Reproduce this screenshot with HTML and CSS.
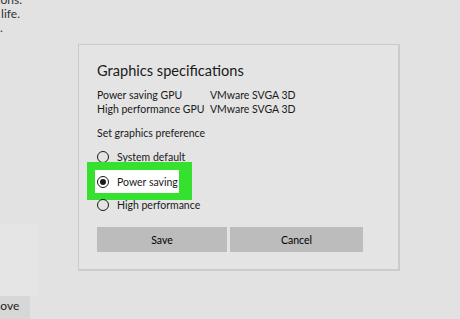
FILE: index.html
```html
<!DOCTYPE html>
<html>
<head>
<meta charset="utf-8">
<link rel="stylesheet" href="styles.css">
</head>
<body>
<div class="page">
  <div class="bg-text">
    <div class="line">tions.</div>
    <div class="line">y life.</div>
    <div class="line">.</div>
  </div>
  <div class="side-panel"></div>
  <div class="remove-btn"><span>Remove</span></div>

  <div class="dialog">
    <div class="title">Graphics specifications</div>
    <div class="specs">
      <div class="spec-row"><span class="spec-key">Power saving GPU</span><span>VMware SVGA 3D</span></div>
      <div class="spec-row"><span class="spec-key">High performance GPU</span><span>VMware SVGA 3D</span></div>
    </div>
    <div class="pref-label">Set graphics preference</div>
    <div class="options">
      <div class="option"><span class="radio"></span><span>System default</span></div>
      <div class="option selected"><span class="radio checked"></span><span>Power saving</span></div>
      <div class="option"><span class="radio"></span><span>High performance</span></div>
    </div>
    <div class="buttons">
      <div class="btn save">Save</div>
      <div class="btn cancel">Cancel</div>
    </div>
  </div>
</div>
</body>
</html>
```
FILE: styles.css
```css
html, body {
  margin: 0;
  padding: 0;
  background: #e2e2e2;
}
.page {
  position: relative;
  width: 460px;
  height: 319px;
  overflow: hidden;
  font-family: Lato, "Noto Sans", sans-serif;
  color: #1a1a1a;
  white-space: nowrap;
}
.bg-text {
  margin-top: -7px;
  font-size: 12px;
  line-height: 14px;
  color: #333;
  display: flex;
  flex-direction: column;
  align-items: flex-end;
  width: 22px;
}
.bg-text .line:nth-child(2) { margin-right: 2px; }
.bg-text .line:nth-child(3) { align-self: flex-start; }

.side-panel {
  position: absolute;
  left: 0;
  top: 224px;
  width: 38px;
  height: 72px;
  background: #e5e5e5;
}
.remove-btn {
  position: absolute;
  left: 0;
  top: 296px;
  width: 30px;
  height: 23px;
  background: #d7d7d7;
  overflow: hidden;
  font-size: 12px;
  line-height: 20px;
  color: #222;
}
.remove-btn span {
  margin-left: -23px;
}

.dialog {
  position: absolute;
  left: 78px;
  top: 44px;
  width: 301px;
  height: 224px;
  border: 1px solid #cbcbcb;
  border-right-width: 2px;
  border-bottom-width: 2px;
  background: #e4e4e4;
  padding: 0 0 0 18px;
  display: flex;
  flex-direction: column;
}
.title {
  margin-top: 17px;
  font-size: 14.6px;
  line-height: 18px;
  color: #1a1a1a;
}
.specs {
  margin-top: 8px;
  font-size: 10.5px;
  line-height: 14px;
}
.spec-row {
  display: flex;
}
.spec-key {
  width: 113px;
}
.pref-label {
  margin-top: 10px;
  font-size: 10.5px;
  line-height: 14px;
}
.options {
  margin-top: 5px;
  display: flex;
  flex-direction: column;
  align-items: flex-start;
  font-size: 10.5px;
}
.option {
  height: 24px;
  display: flex;
  align-items: center;
  gap: 8px;
}
.option.selected {
  background: #ffffff;
  padding: 0 0 0 2px;
  width: 82px;
  height: 23px;
  border-style: solid;
  border-color: #36e02f;
  border-width: 8px 13px 7px 8px;
  margin: -7px 0 -7px -10px;
}
.radio {
  width: 10px;
  height: 10px;
  border: 1.6px solid #1a1a1a;
  border-radius: 50%;
  display: flex;
  align-items: center;
  justify-content: center;
  flex: none;
}
.radio.checked::after {
  content: "";
  width: 6px;
  height: 6px;
  border-radius: 50%;
  background: #1a1a1a;
}
.buttons {
  margin-top: 10px;
  display: flex;
  gap: 3px;
}
.btn {
  height: 25px;
  background: #bcbcbc;
  display: flex;
  align-items: center;
  justify-content: center;
  font-size: 10.5px;
  color: #000;
}
.save { width: 130px; }
.cancel { width: 133px; }
```
